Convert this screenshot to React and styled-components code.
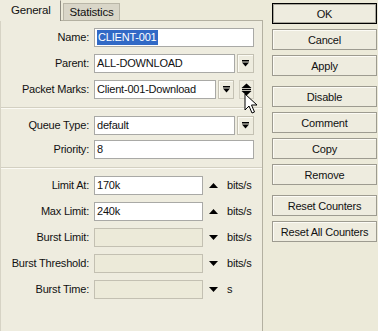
import React from "react";
import styled, { createGlobalStyle } from "styled-components";

const GlobalStyle = createGlobalStyle`
  body {
    margin: 0;
  }
  * {
    box-sizing: border-box;
  }
`;

function DropArrow() {
  return (
    <svg width="7" height="7" viewBox="0 0 7 7">
      <rect x="0" y="0" width="7" height="1.5" fill="#000" />
      <polygon points="0,2.5 7,2.5 3.5,6.5" fill="#000" />
    </svg>
  );
}

function UpDown() {
  return (
    <svg width="11" height="13" viewBox="0 0 11 13">
      <polygon points="0.5,5 5.5,0.5 10.5,5" fill="#000" />
      <rect x="1" y="5.8" width="9" height="1.4" fill="#000" />
      <polygon points="0.5,8 10.5,8 5.5,12.5" fill="#000" />
    </svg>
  );
}

function Tri({ up }) {
  return (
    <svg width="9" height="5" viewBox="0 0 9 5">
      <polygon points={up ? "0,5 4.5,0 9,5" : "0,0 9,0 4.5,5"} fill="#000" />
    </svg>
  );
}

function Cursor() {
  return (
    <svg width="14" height="22" viewBox="0 0 14 22">
      <path
        d="M1 1 L1 17 L5 13 L8 20 L10.5 19 L7.5 12 L13 12 Z"
        fill="#fff"
        stroke="#000"
        strokeWidth="1"
        strokeLinejoin="miter"
      />
    </svg>
  );
}

function FormRow({ label, children }) {
  return (
    <Row>
      <Label>{label}</Label>
      <Control>{children}</Control>
    </Row>
  );
}

function RateRow({ label, value, up, unit, disabled }) {
  return (
    <FormRow label={label}>
      <Field width={109} disabled={disabled}>
        {value}
      </Field>
      <TriBox>
        <Tri up={up} />
      </TriBox>
      <Unit>{unit}</Unit>
    </FormRow>
  );
}

export default function App() {
  return (
    <Frame>
      <GlobalStyle />
      <Left>
        <Tabs>
          <Tab active>General</Tab>
          <Tab>Statistics</Tab>
        </Tabs>
        <Panel>
          <Section gap={7}>
            <FormRow label="Name:">
              <Field>
                <Selected>CLIENT-001</Selected>
              </Field>
            </FormRow>
            <FormRow label="Parent:">
              <Field>ALL-DOWNLOAD</Field>
              <DropButton>
                <DropArrow />
              </DropButton>
            </FormRow>
            <FormRow label="Packet Marks:">
              <Field>Client-001-Download</Field>
              <DropButton narrow>
                <DropArrow />
              </DropButton>
              <UpDownBox>
                <UpDown />
              </UpDownBox>
            </FormRow>
          </Section>
          <Divider />
          <Section gap={5}>
            <FormRow label="Queue Type:">
              <Field>default</Field>
              <DropButton>
                <DropArrow />
              </DropButton>
            </FormRow>
            <FormRow label="Priority:">
              <Field>8</Field>
            </FormRow>
          </Section>
          <Divider />
          <Section gap={7}>
            <RateRow label="Limit At:" value="170k" up unit="bits/s" />
            <RateRow label="Max Limit:" value="240k" up unit="bits/s" />
            <RateRow label="Burst Limit:" unit="bits/s" disabled />
            <RateRow label="Burst Threshold:" unit="bits/s" disabled />
            <RateRow label="Burst Time:" unit="s" disabled />
          </Section>
        </Panel>
      </Left>
      <Side>
        <ButtonGroup>
          <Button primary>OK</Button>
          <Button>Cancel</Button>
          <Button>Apply</Button>
        </ButtonGroup>
        <ButtonGroup>
          <Button>Disable</Button>
          <Button>Comment</Button>
          <Button>Copy</Button>
          <Button>Remove</Button>
        </ButtonGroup>
        <ButtonGroup space={12}>
          <Button>Reset Counters</Button>
          <Button>Reset All Counters</Button>
        </ButtonGroup>
      </Side>
      <Pointer>
        <Cursor />
      </Pointer>
    </Frame>
  );
}

const Frame = styled.div`
  position: relative;
  display: flex;
  width: 378px;
  height: 331px;
  overflow: hidden;
  background: #ecead9;
  font-family: "Liberation Sans", Arial, sans-serif;
  font-size: 11px;
  letter-spacing: -0.2px;
  color: #111;
`;

const Left = styled.div`
  width: 263px;
  display: flex;
  flex-direction: column;
`;

const Tabs = styled.div`
  display: flex;
  align-items: flex-end;
  height: 20px;
`;

const Tab = styled.div`
  height: ${(p) => (p.active ? "21px" : "17px")};
  margin-bottom: ${(p) => (p.active ? "-1px" : "0")};
  margin-left: ${(p) => (p.active ? "0" : "2px")};
  padding: ${(p) => (p.active ? "3px 9px 0 10px" : "2px 5px 0 6px")};
  font-size: 11.5px;
  background: ${(p) => (p.active ? "#eeecdf" : "#d9d6c8")};
  border: 1px solid ${(p) => (p.active ? "#eeecdf" : "#b9b6a7")};
  border-right-color: ${(p) => (p.active ? "#8d8b80" : "#b9b6a7")};
  border-bottom: none;
  position: relative;
  z-index: 1;
`;

const Panel = styled.div`
  flex: 1;
  background: #eeecdf;
  border: 1px solid #b3b0a1;
  border-left-color: #d6d3c5;
  border-bottom: none;
  padding: 7px 8px 0 0;
`;

const Section = styled.div`
  display: flex;
  flex-direction: column;
  gap: ${(p) => p.gap}px;
`;

const Divider = styled.div`
  height: 2px;
  margin: 8px -8px 7px 0;
  border-top: 1px solid #d3d0c2;
  border-bottom: 1px solid #fbfaf4;
`;

const Row = styled.div`
  display: grid;
  grid-template-columns: 88px 1fr;
  column-gap: 5px;
  height: 19px;
`;

const Label = styled.div`
  text-align: right;
  line-height: 19px;
  white-space: nowrap;
`;

const Control = styled.div`
  display: flex;
  align-items: center;
  gap: 2px;
`;

const Field = styled.div`
  ${(p) => (p.width ? `width: ${p.width}px;` : "flex: 1;")}
  height: 19px;
  line-height: 17px;
  padding: 0 2px;
  white-space: nowrap;
  overflow: hidden;
  background: ${(p) => (p.disabled ? "#ecead9" : "#fff")};
  border: 1px solid ${(p) => (p.disabled ? "#c3c0b2" : "#a9a9a6")};
`;

const Selected = styled.span`
  display: inline-block;
  padding: 0 1px;
  line-height: 15px;
  background: #3169c6;
  color: #fff;
`;

const DropButton = styled.div`
  width: ${(p) => (p.narrow ? "16px" : "17px")};
  height: 19px;
  display: flex;
  align-items: center;
  justify-content: center;
  background: #eeecdf;
  border: 1px solid #c4c1b3;
  box-shadow: inset 1px 1px #fbfaf3;
`;

const UpDownBox = styled.div`
  width: 15px;
  height: 19px;
  margin-left: 3px;
  display: flex;
  align-items: center;
  justify-content: center;
  border: 1px solid #d2cfc1;
`;

const TriBox = styled.div`
  width: 9px;
  margin-left: 4px;
  display: flex;
  align-items: center;
`;

const Unit = styled.div`
  margin-left: 7px;
  line-height: 19px;
`;

const Side = styled.div`
  display: flex;
  flex-direction: column;
  padding: 3px 0 0 9px;
`;

const ButtonGroup = styled.div`
  display: flex;
  flex-direction: column;
  gap: 5px;
  margin-bottom: ${(p) => p.space || 10}px;
`;

const Button = styled.div`
  width: 105px;
  height: 21px;
  display: flex;
  align-items: center;
  justify-content: center;
  background: #eeecdf;
  border: 1px solid ${(p) => (p.primary ? "#000" : "#9d9b90")};
  box-shadow: ${(p) =>
    p.primary ? "inset 0 0 0 1px #a9a79c" : "inset 1px 1px #fcfbf5"};
  white-space: nowrap;
`;

const Pointer = styled.div`
  position: absolute;
  left: 244px;
  top: 93px;
  line-height: 0;
`;
